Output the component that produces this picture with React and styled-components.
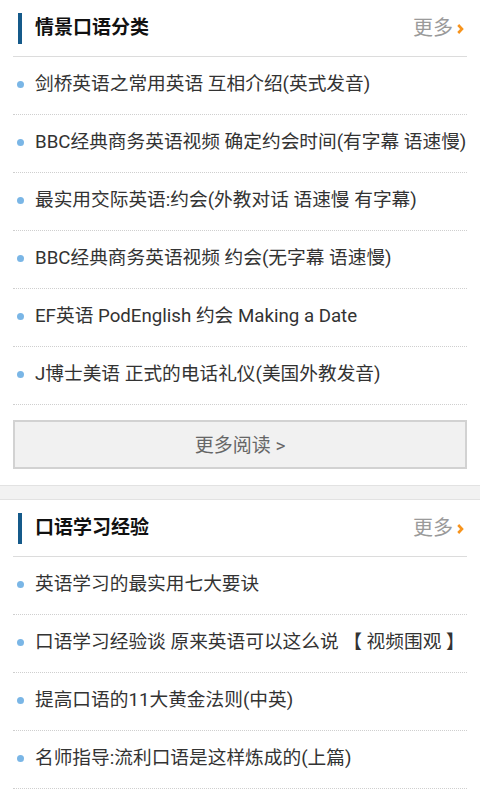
import React from 'react';
import styled, { createGlobalStyle } from 'styled-components';

const GlobalStyle = createGlobalStyle`
  body {
    margin: 0;
    background: #fff;
    font-family: Roboto, "Noto Sans CJK SC", sans-serif;
  }
`;

const Section = styled.section`
  padding: 0 13px;
`;

const Header = styled.div`
  height: 56px;
  display: flex;
  align-items: center;
  justify-content: space-between;
  border-bottom: 1px solid #dcdcdc;
`;

const Title = styled.h2`
  margin: 0 0 0 5px;
  padding-left: 13px;
  border-left: 4px solid #155a8a;
  height: 31px;
  line-height: 29px;
  font-size: 19px;
  font-weight: bold;
  color: #111;
`;

const More = styled.a`
  display: flex;
  align-items: center;
  gap: 4px;
  margin-right: 3px;
  padding-bottom: 3px;
  font-size: 20px;
  color: #9a9a9a;
  text-decoration: none;

  svg {
    margin-top: 4px;
  }
`;

const List = styled.ul`
  list-style: none;
  margin: 0;
  padding: 0;
`;

const Item = styled.li`
  height: 53px;
  padding-bottom: 4px;
  display: flex;
  align-items: center;
  border-bottom: 1px dotted #cfcfcf;
  font-size: 18.7px;
  line-height: 24px;
  color: #333;
  white-space: nowrap;

  &::before {
    content: '';
    width: 7px;
    height: 7px;
    border-radius: 50%;
    background: #7ab6e6;
    margin: 2px 11px 0 4px;
    flex-shrink: 0;
  }
`;

const MoreButton = styled.div`
  margin: 15px 0 16px;
  height: 49px;
  box-sizing: border-box;
  border: 2px solid #d2d2d2;
  background: #f1f1f1;
  display: flex;
  align-items: center;
  justify-content: center;
  padding-bottom: 3px;
  font-size: 19px;
  color: #666;
`;

const Band = styled.div`
  height: 13px;
  background: #f2f2f2;
  border-top: 1px solid #e2e2e2;
  border-bottom: 1px solid #e2e2e2;
`;

const Chevron = () => (
  <svg width="7" height="10" viewBox="0 0 7 10">
    <path d="M1.2 1 L5 5 L1.2 9" fill="none" stroke="#f7941d" strokeWidth="2.6" />
  </svg>
);

const sections = [
  {
    title: '情景口语分类',
    items: [
      '剑桥英语之常用英语 互相介绍(英式发音)',
      'BBC经典商务英语视频 确定约会时间(有字幕 语速慢)',
      '最实用交际英语:约会(外教对话 语速慢 有字幕)',
      'BBC经典商务英语视频 约会(无字幕 语速慢)',
      'EF英语 PodEnglish 约会 Making a Date',
      'J博士美语 正式的电话礼仪(美国外教发音)',
    ],
    button: true,
  },
  {
    title: '口语学习经验',
    items: [
      '英语学习的最实用七大要诀',
      '口语学习经验谈 原来英语可以这么说 【 视频围观 】',
      '提高口语的11大黄金法则(中英)',
      '名师指导:流利口语是这样炼成的(上篇)',
    ],
  },
];

const App = () => (
  <>
    <GlobalStyle />
    {sections.map((s, i) => (
      <React.Fragment key={s.title}>
        {i > 0 && <Band />}
        <Section>
          <Header>
            <Title>{s.title}</Title>
            <More>
              更多
              <Chevron />
            </More>
          </Header>
          <List>
            {s.items.map((t) => (
              <Item key={t}>{t}</Item>
            ))}
          </List>
          {s.button && <MoreButton>更多阅读 &gt;</MoreButton>}
        </Section>
      </React.Fragment>
    ))}
  </>
);

export default App;
